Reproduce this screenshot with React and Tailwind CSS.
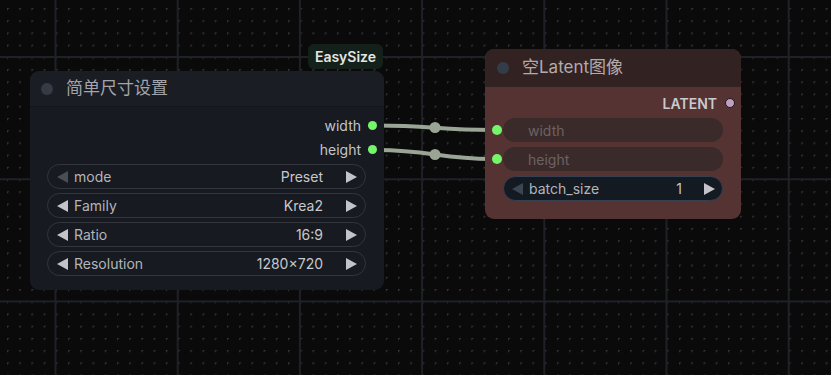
import React from 'react';

const FONT = { fontFamily: 'Inter, "Noto Sans CJK SC", sans-serif' };

const Tri = ({ dir, dim, dimColor = '#4a4d54' }) => (
  <svg width="11" height="12" viewBox="0 0 11 12" className="shrink-0">
    {dir === 'left' ? (
      <polygon points="11,0 11,12 0,6" fill={dim ? dimColor : '#c2c4ca'} />
    ) : (
      <polygon points="0,0 0,12 11,6" fill={dim ? dimColor : '#c2c4ca'} />
    )}
  </svg>
);

const Combo = ({ label, value, dimLeft }) => (
  <div className="flex items-center h-[25px] rounded-full border border-[#33363d] bg-[#171a20] pl-[9px] pr-[8px] text-[14px]">
    <Tri dir="left" dim={dimLeft} />
    <span className="ml-[6px] text-[#b3b5ba]">{label}</span>
    <span className="ml-auto text-[#c6c8cd]">{value}</span>
    <span className="ml-[23px]">
      <Tri dir="right" />
    </span>
  </div>
);

const GridBg = () => (
  <svg className="absolute inset-0" width="831" height="375">
    <defs>
      <pattern id="dots" x="7" y="8" width="12.22" height="12.22" patternUnits="userSpaceOnUse">
        <path d="M0 -1.5 V1.5 M-1.5 0 H1.5" stroke="#343539" strokeWidth="1" transform="translate(0.5 0.5)" />
      </pattern>
    </defs>
    <rect width="831" height="375" fill="#0a0a0b" />
    <rect width="831" height="375" fill="url(#dots)" />
    {[55.5, 177.7, 299.9, 422.1, 544.3, 666.5, 788.7].map((x) => (
      <rect key={x} x={x - 1} y="0" width="2" height="375" fill="#1f2126" />
    ))}
    {[57, 179.2, 301.4].map((y) => (
      <rect key={y} x="0" y={y - 1} width="831" height="2" fill="#1f2126" />
    ))}
  </svg>
);

const Links = () => (
  <svg className="absolute inset-0 pointer-events-none" width="831" height="375">
    <path d="M377 125.5 C430 125.5, 440 130, 492 130" stroke="#9aa596" strokeWidth="4" fill="none" />
    <path d="M377 150 C430 150, 440 159, 492 159" stroke="#9aa596" strokeWidth="4" fill="none" />
    <circle cx="435" cy="127.5" r="5.5" fill="#9aa596" />
    <circle cx="435" cy="154.5" r="5.5" fill="#9aa596" />
  </svg>
);

export default function App() {
  return (
    <div className="relative w-[831px] h-[375px] overflow-hidden bg-[#0a0a0b]" style={FONT}>
      <GridBg />
      <Links />

      {/* badge */}
      <div className="absolute left-[308px] top-[44px] w-[75px] h-[25px] rounded-[6px] bg-[#14201a] flex items-center justify-center text-[14px] font-semibold text-[#e4e6e4]">
        EasySize
      </div>

      {/* 简单尺寸设置 */}
      <div className="absolute left-[30px] top-[71px] w-[354px] h-[219px] rounded-[9px] bg-[#171a20] overflow-hidden flex flex-col">
        <div className="h-[36px] flex items-center pl-[11px] bg-[#1a1d24] border-b border-[#13151a]">
          <div className="w-[12px] h-[12px] rounded-full bg-[#353a44]" />
          <span className="ml-[13px] text-[17px] text-[#a3a5ab]">简单尺寸设置</span>
        </div>
        <div className="flex flex-col pt-[6px] pr-[7px]">
          {['width', 'height'].map((o) => (
            <div key={o} className="h-[24px] flex items-center justify-end text-[14px] text-[#c3c5ca]">
              <span>{o}</span>
              <div className="ml-[7px] w-[9px] h-[9px] rounded-full bg-[#74f56a]" />
            </div>
          ))}
        </div>
        <div className="flex flex-col gap-[4px] mt-[3px] ml-[17px] mr-[18px]">
          <Combo label="mode" value="Preset" dimLeft />
          <Combo label="Family" value="Krea2" />
          <Combo label="Ratio" value="16:9" />
          <Combo label="Resolution" value="1280×720" />
        </div>
      </div>

      {/* 空Latent图像 */}
      <div className="absolute left-[485px] top-[49px] w-[256px] h-[170px] rounded-[9px] bg-[#553333] overflow-hidden flex flex-col">
        <div className="h-[38px] flex items-center pl-[12px] bg-[#332222]">
          <div className="w-[12px] h-[12px] rounded-full bg-[#333d48]" />
          <span className="ml-[13px] text-[17px] text-[#b3abab]">空Latent图像</span>
        </div>
        <div className="h-[30px] mt-[1px] flex items-center justify-end pr-[6px] text-[14px] font-semibold text-[#c8cacf]">
          <span>LATENT</span>
          <div className="ml-[8px] w-[10px] h-[10px] rounded-full bg-[#c29fc2] border border-[#1a1a1a]" />
        </div>
        <div className="flex flex-col gap-[5px] ml-[18px] mr-[18px]">
          {['width', 'height'].map((w) => (
            <div key={w} className="relative h-[24px] rounded-full bg-[#3b2a2a] flex items-center pl-[25px] text-[14px] text-[#6c6262]">
              <div className="absolute left-[-11px] top-[7px] w-[10px] h-[10px] rounded-full bg-[#74f56a]" />
              {w}
            </div>
          ))}
          <div className="h-[25px] rounded-full border border-[#364050] bg-[#141a22] flex items-center pl-[8px] pr-[7px] text-[14px]">
            <Tri dir="left" dim dimColor="#3c4552" />
            <span className="ml-[6px] text-[#b3b5ba]">batch_size</span>
            <span className="ml-auto text-[#c6c8cd]">1</span>
            <span className="ml-[22px]">
              <Tri dir="right" />
            </span>
          </div>
        </div>
      </div>
    </div>
  );
}
